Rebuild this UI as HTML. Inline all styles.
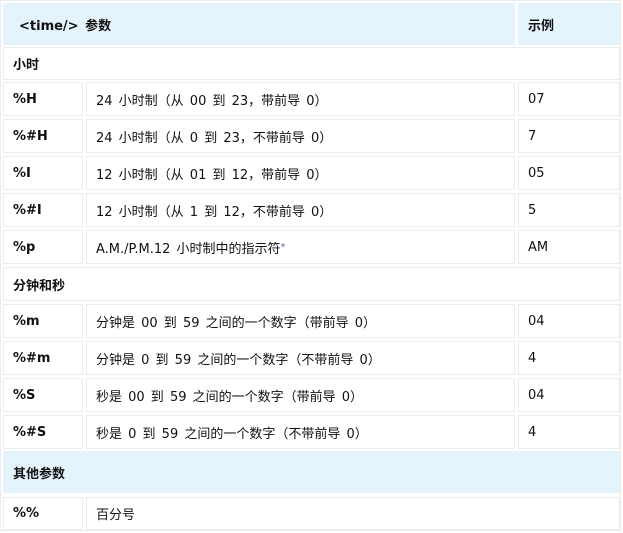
<!DOCTYPE html>
<html><head><meta charset="utf-8"><style>
body{margin:0;width:623px;height:533px;background:#fff;position:relative;overflow:hidden;font-family:"DejaVu Sans","Liberation Sans","Noto Sans CJK SC",sans-serif;font-size:13px;color:#111;}
.o{position:absolute;left:0;top:0;width:621px;height:531px;border:1px solid #ececec;box-sizing:border-box;}
.c{position:absolute;box-sizing:border-box;border:1px solid #ececec;display:flex;align-items:center;padding-left:9px;white-space:nowrap;word-spacing:2px;}
.b{font-weight:bold;}
.h{background:#e5f3fc;border-color:#e5f3fc;}
sup{color:#6a5acd;font-size:10px;}
</style></head><body>
<div class="o"></div>
<div class="c h b" style="left:3px;top:3px;width:512px;height:42px;padding-left:15px">&lt;time/&gt; 参数</div>
<div class="c h b" style="left:518px;top:3px;width:102px;height:42px">示例</div>
<div class="c b" style="left:3px;top:47px;width:617px;height:33px">小时</div>

<div class="c b" style="left:3px;top:82px;width:80px;height:34px">%H</div>
<div class="c" style="left:86px;top:82px;width:429px;height:34px">24 小时制（从 00 到 23，带前导 0）</div>
<div class="c" style="left:518px;top:82px;width:102px;height:34px">07</div>

<div class="c b" style="left:3px;top:119px;width:80px;height:34px">%#H</div>
<div class="c" style="left:86px;top:119px;width:429px;height:34px">24 小时制（从 0 到 23，不带前导 0）</div>
<div class="c" style="left:518px;top:119px;width:102px;height:34px">7</div>

<div class="c b" style="left:3px;top:156px;width:80px;height:34px">%I</div>
<div class="c" style="left:86px;top:156px;width:429px;height:34px">12 小时制（从 01 到 12，带前导 0）</div>
<div class="c" style="left:518px;top:156px;width:102px;height:34px">05</div>

<div class="c b" style="left:3px;top:193px;width:80px;height:34px">%#I</div>
<div class="c" style="left:86px;top:193px;width:429px;height:34px">12 小时制（从 1 到 12，不带前导 0）</div>
<div class="c" style="left:518px;top:193px;width:102px;height:34px">5</div>

<div class="c b" style="left:3px;top:230px;width:80px;height:34px">%p</div>
<div class="c" style="left:86px;top:230px;width:429px;height:34px">A.M./P.M.12 小时制中的指示符<sup>*</sup></div>
<div class="c" style="left:518px;top:230px;width:102px;height:34px">AM</div>

<div class="c b" style="left:3px;top:267px;width:617px;height:34px">分钟和秒</div>

<div class="c b" style="left:3px;top:304px;width:80px;height:34px">%m</div>
<div class="c" style="left:86px;top:304px;width:429px;height:34px">分钟是 00 到 59 之间的一个数字（带前导 0）</div>
<div class="c" style="left:518px;top:304px;width:102px;height:34px">04</div>

<div class="c b" style="left:3px;top:341px;width:80px;height:34px">%#m</div>
<div class="c" style="left:86px;top:341px;width:429px;height:34px">分钟是 0 到 59 之间的一个数字（不带前导 0）</div>
<div class="c" style="left:518px;top:341px;width:102px;height:34px">4</div>

<div class="c b" style="left:3px;top:378px;width:80px;height:34px">%S</div>
<div class="c" style="left:86px;top:378px;width:429px;height:34px">秒是 00 到 59 之间的一个数字（带前导 0）</div>
<div class="c" style="left:518px;top:378px;width:102px;height:34px">04</div>

<div class="c b" style="left:3px;top:415px;width:80px;height:34px">%#S</div>
<div class="c" style="left:86px;top:415px;width:429px;height:34px">秒是 0 到 59 之间的一个数字（不带前导 0）</div>
<div class="c" style="left:518px;top:415px;width:102px;height:34px">4</div>

<div class="c h b" style="left:3px;top:451px;width:617px;height:42px">其他参数</div>

<div class="c b" style="left:3px;top:497px;width:80px;height:33px">%%</div>
<div class="c" style="left:86px;top:497px;width:534px;height:33px">百分号</div>
</body></html>
